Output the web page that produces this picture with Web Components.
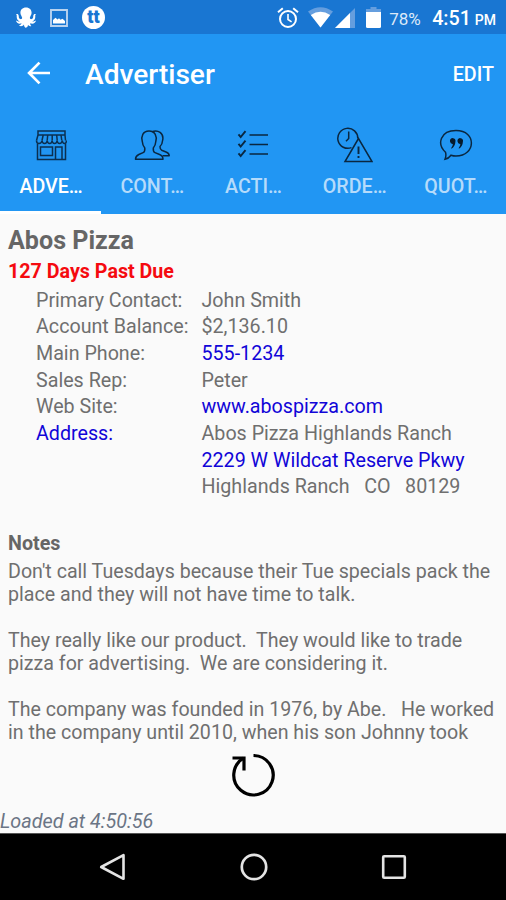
<!DOCTYPE html>
<html lang="en">
<head>
<meta charset="utf-8">
<title>Advertiser</title>
<style>
    body{
        margin: 0;
        font-family: Roboto, "Liberation Sans", sans-serif;
        font-size: 19.68px;
        color: #6f6f6f;
        background: #fafafa;
    }
</style>
</head>
<body>
<advertiser-app></advertiser-app>

<script>
const icons = {
    octopus: [22, 22, `<path fill="#fff" d="M11 0.500c-3.600 0-5.600 2.300-5.600 5.300 0 2 1.300 3.400 1.700 4.700.2 1.200-.7 1.900-1.900 1.600-1.500-.4-1.300-1.800-1.500-3.300C3.500 7.200 2.300 6.500 1 7.300c1.100.6.7 1.600.7 2.600.1 2 1.100 3.700 3 4.300-1.200.5-2.600.2-3.700-.6.3 2.600 3.200 3.800 5.600 2.700-.5 1.300-1.400 1.900-2.600 2 1.300 1.600 3.800 1.200 5-.7 0 1.200.3 2.300 1.400 3.200 1.400-.1 2.400-.9 2.600-2.700.8.900 1.900 1.500 3.400.9-.9-.5-1.300-1.500-1.200-2.700 2.400 1.200 5.400.1 5.800-2.700-1.100.8-2.500 1.100-3.700.6 1.900-.6 2.900-2.300 3-4.300 0-1-.4-2 .7-2.600-1.300-.8-2.500-.1-2.700 1.500-.2 1.500 0 2.900-1.500 3.300-1.200.3-2.100-.4-1.900-1.600.4-1.300 1.700-2.700 1.700-4.700 0-3-2-5.300-5.600-5.300z"/>`],
    picture: [18, 18, `<path d="M1 1h16v16H1z" fill="none" stroke="#b9d3f0" stroke-width="1.900"/><path fill="#fff" d="M3 14.500v-3.500l2.500-2.200 2 1.800 1.500-1.300 1.500 1.500 2-1 2.500 2.200v2.500z"/>`],
    alarm: [22, 22, `<g fill="none" stroke="#fff" stroke-width="2"><circle cx="11" cy="12" r="8"/><path d="M11 7v5.500l3.600 2.300" stroke-width="1.600"/><path d="M1 5.300L5.800 1.300M21 5.300l-4.800-4"/></g>`],
    wifi: [25, 21, `<path fill="#659ede" d="M0 4.500Q12.500-4 25 4.500L12.500 20.500z"/><path fill="#fff" d="M2.800 8Q12.500 1.500 22.200 8L12.500 20.500z"/>`],
    signal: [20, 20, `<path fill="#659ede" d="M20 0v20H0z"/><path fill="#fff" d="M15 5v15H0z"/>`],
    battery: [15, 21, `<path fill="#659ede" d="M4.500 0h6v2H15v5H0V2h4.500z"/><path fill="#fff" d="M0 5h15v14.500q0 1.500-1.500 1.500h-12Q0 21 0 19.500z"/>`],
    back: [24, 24, `<path d="M23 12H2.500M12.500 1.600L2.100 12l10.400 10.400" fill="none" stroke="#fff" stroke-width="2.700"/>`],
    store: [32, 32, `<g fill="none" stroke="#0b2f50" stroke-width="1.500"><path d="M3 2h27v4H3zM3 6L1.500 11.500M30 6l.500 5.500M2.500 14.500V30.500h28V14.500"/><path d="M1.500 11.500q0 3 2.500 3t3-3q.3 3 2.600 3t2.600-3q.3 3 2.500 3t2.400-3q.3 3 2.500 3t2.500-3q.3 3 2.500 3t2.700-3q.3 3 2.200 3t2-3"/><path d="M8.200 6L7 11.500M12.700 6l-.5 5.500M17.200 6v5.500M21.700 6l.5 5.500M26 6l.800 5.500"/><path d="M5.500 18h12v8.500h-12zM20.500 30V18h6.500v12.500"/></g>`],
    contacts: [36, 32, `<g fill="none" stroke="#0a2740" stroke-width="1.500" stroke-linejoin="round"><path d="M1.500 30.300h27.500q0-3.500-3.400-4.800l-4.600-1.900q-2-.8-1.700-4.600 2.200-2.300 2.500-6.500c1.400-5-.6-10.500-6.800-10.500S6.900 7.500 8.300 12.500q.3 4.200 2.500 6.500.3 3.800-1.700 4.600L4.800 25.500Q1.500 27 1.500 30.300z"/><path d="M18 2.700c6-2.500 12 1.500 10.700 8.300q-.4 4.500-2.700 6.500-.1 3 1.700 3.800l4.300 1.700q3.200 1.300 3.200 3.700h-6.500"/></g>`],
    checks: [32, 30, `<g fill="none" stroke="#0a2740"><path stroke-width="1.600" d="M12.500 5H31M12.500 14.500H31M12.500 24H31"/><path stroke-width="1.900" d="M1.500 4.300l2.200 2.700L8.500 1.200M1.500 13.800l2.200 2.700 4.800-5.800M1.500 23.300l2.200 2.700 4.800-5.800"/></g>`],
    overdue: [36, 36, `<g fill="none" stroke="#0a2740" stroke-width="1.500"><path d="M14.500 20.600A10 10 0 1 1 20.800 11.500"/><path d="M11.700 4.500V11.500L9 14.200"/><path d="M21.500 11.500L8 34.500h27z"/><path stroke-width="1.900" d="M21.500 19.500v7.500M21.500 29v2"/></g>`],
    quote: [34, 32, `<path d="M6.500 23.200C-2.500 15 1.500 1.500 17 1.500c21 0 20 25.500 0 25.500q-2.500 0-5-.8-2.300 3.200-6 4 1.500-3.500.500-7z" fill="none" stroke="#0a2740" stroke-width="1.500"/><path fill="#061a2c" d="M11 12.500a2.800 2.800 0 1 1 5.400.300q-.2 4.500-4 7-.7-.6.700-2.300.8-1.400.7-2.600-2.400.2-2.800-2.400zM18.500 12.500a2.800 2.800 0 1 1 5.400.300q-.2 4.500-4 7-.7-.6.700-2.300.8-1.400.7-2.600-2.400.2-2.800-2.400z"/>`],
    refresh: [46, 46, `<g fill="none" stroke="#000" stroke-width="3.200"><path d="M23.500 3.500A19.700 19.700 0 1 1 13.500 6.200"/><path d="M2.500 6h11.500v12.500"/></g>`],
    navBack: [28, 28, `<path d="M24.500 2.200v23.600L2.200 14z" fill="none" stroke="#e4e4e4" stroke-width="2.600" stroke-linejoin="round"/>`],
    navHome: [28, 28, `<circle cx="14" cy="14" r="12.200" fill="none" stroke="#e4e4e4" stroke-width="2.700"/>`],
    navRecent: [26, 26, `<rect x="2.200" y="2.200" width="21.600" height="21.600" rx="1" fill="none" stroke="#e4e4e4" stroke-width="2.600"/>`]
};

class AppIcon extends HTMLElement{
    constructor(){
        super();
        this.attachShadow({ mode: 'open' });
    }

    connectedCallback(){
        const [w, h, shapes] = icons[this.getAttribute('name')];
        this.shadowRoot.innerHTML = `
        <style>
            :host{ display: block; flex: none; width: ${w}px; height: ${h}px; }
            svg{ display: block; }
        </style>
        <svg width="${w}" height="${h}" viewBox="0 0 ${w} ${h}">${shapes}</svg>`;
    }
}
customElements.define('app-icon', AppIcon);

// registers an element whose shadow root is a clone of the given markup
function define(name, html){
    const template = document.createElement('template');
    template.innerHTML = html;
    customElements.define(name, class extends HTMLElement{
        constructor(){
            super();
            this.attachShadow({ mode: 'open' });
            this.shadowRoot.appendChild(template.content.cloneNode(true));
        }
    });
}

define('status-bar', `
<style>
    :host{
        display: flex;
        align-items: center;
        box-sizing: border-box;
        height: 34px;
        padding: 1px 10px 0 15px;
        background: #1976d2;
        color: #fff;
    }
    .badge{
        width: 23px;
        height: 23px;
        border-radius: 50%;
        background: #fff;
        color: #1976d2;
        font-size: 18px;
        font-weight: 900;
        line-height: 21px;
        text-align: center;
        margin-left: 14px;
    }
    .percent{ margin: 2px 0 0 8px; font-size: 17px; width: 43px; color: #dce9f8; }
    .time{ margin-top: 2px; font-size: 19.700px; font-weight: 500; white-space: nowrap; }
    small{ font-size: 14px; margin-left: -1px; }
</style>
<app-icon name="octopus"></app-icon>
<app-icon name="picture" style="margin-left:13px"></app-icon>
<span class="badge">tt</span>
<app-icon name="alarm" style="margin-left:auto"></app-icon>
<app-icon name="wifi" style="margin-left:9px"></app-icon>
<app-icon name="signal" style="margin-left:2px"></app-icon>
<app-icon name="battery" style="margin-left:11px"></app-icon>
<span class="percent">78%</span>
<span class="time">4:51 <small>PM</small></span>
`);

define('tool-bar', `
<style>
    :host{
        display: flex;
        align-items: center;
        box-sizing: border-box;
        height: 78px;
        padding: 0 12px 0 27px;
        background: #2196f3;
        color: #fff;
        font-weight: 500;
    }
    h1{
        flex: 1;
        margin: 3px 0 0 34px;
        font-size: 28.100px;
        font-weight: 500;
    }
    .action{ margin-top: 2px; }
</style>
<app-icon name="back"></app-icon>
<h1><slot></slot></h1>
<span class="action"><slot name="action"></slot></span>
`);

define('tab-item', `
<style>
    :host{
        display: flex;
        flex-direction: column;
        align-items: center;
        box-sizing: border-box;
        padding-left: 1px;
        border-bottom: 3px solid transparent;
        color: #b5dbfb;
        font-weight: 500;
    }
    :host([selected]){
        color: #fff;
        border-color: #fff;
    }
    .icon{
        display: flex;
        align-items: center;
        height: 36px;
        margin-top: 15px;
    }
    .label{ margin-top: 12px; line-height: 23px; }
</style>
<div class="icon"><slot name="icon"></slot></div>
<div class="label"><slot></slot></div>
`);

define('tab-strip', `
<style>
    :host{
        display: grid;
        grid-template-columns: repeat(5, 1fr);
        height: 101.500px;
        background: #2196f3;
    }
</style>
<slot></slot>
`);

define('detail-row', `
<style>
    :host{
        display: grid;
        grid-template-columns: 165.500px 1fr;
        line-height: 26.700px;
        white-space: pre;
    }
    :host([link]) .value, :host([linklabel]) .label{ color: #1105d8; }
</style>
<span class="label"><slot name="label"></slot></span>
<span class="value"><slot></slot></span>
`);

define('advertiser-details', `
<style>
    :host{ display: block; padding: 12px 8px 0; }
    h2{ margin: 0; font-size: 25.100px; line-height: 30px; font-weight: 700; color: #666; }
    .due{ color: #f50a0f; font-weight: 700; line-height: 23px; margin-top: 4px; }
    .rows{ padding: 5px 0 0 28px; }
</style>
<h2><slot name="name"></slot></h2>
<div class="due"><slot name="due"></slot></div>
<div class="rows"><slot></slot></div>
`);

define('notes-block', `
<style>
    :host{ display: block; padding: 30.500px 0 0 8px; }
    h3{ margin: 0 0 5px; font-size: inherit; line-height: 23px; font-weight: 700; color: #666; }
    .text{ font-size: 19.640px; line-height: 23px; white-space: pre; }
</style>
<h3>Notes</h3>
<div class="text"><slot></slot></div>
`);

define('nav-bar', `
<style>
    :host{
        display: flex;
        align-items: center;
        justify-content: space-between;
        box-sizing: border-box;
        height: 67px;
        padding: 0 99px;
        background: #000;
        border-top: 1px solid #555;
    }
</style>
<app-icon name="navBack"></app-icon>
<app-icon name="navHome"></app-icon>
<app-icon name="navRecent"></app-icon>
`);

define('advertiser-app', `
<style>
    :host{
        display: flex;
        flex-direction: column;
        width: 506px;
        height: 900px;
        overflow: hidden;
    }
    main{ flex: 1; min-height: 0; }
    footer{ color: #6b7585; font-style: italic; font-size: 19.800px; line-height: 23px; }
    .refresh{ display: flex; justify-content: center; padding-bottom: 12px; }
</style>
<status-bar></status-bar>
<tool-bar>Advertiser<span slot="action">EDIT</span></tool-bar>
<tab-strip>
    <tab-item selected><app-icon slot="icon" name="store"></app-icon>ADVE…</tab-item>
    <tab-item><app-icon slot="icon" name="contacts"></app-icon>CONT…</tab-item>
    <tab-item><app-icon slot="icon" name="checks"></app-icon>ACTI…</tab-item>
    <tab-item><app-icon slot="icon" name="overdue"></app-icon>ORDE…</tab-item>
    <tab-item><app-icon slot="icon" name="quote"></app-icon>QUOT…</tab-item>
</tab-strip>
<main>
    <advertiser-details>
        <span slot="name">Abos Pizza</span>
        <span slot="due">127 Days Past Due</span>
        <detail-row><span slot="label">Primary Contact:</span>John Smith</detail-row>
        <detail-row><span slot="label">Account Balance:</span>$2,136.10</detail-row>
        <detail-row link><span slot="label">Main Phone:</span>555-1234</detail-row>
        <detail-row><span slot="label">Sales Rep:</span>Peter</detail-row>
        <detail-row link><span slot="label">Web Site:</span>www.abospizza.com</detail-row>
        <detail-row linklabel><span slot="label">Address:</span>Abos Pizza Highlands Ranch</detail-row>
        <detail-row link>2229 W Wildcat Reserve Pkwy</detail-row>
        <detail-row>Highlands Ranch   CO   80129</detail-row>
    </advertiser-details>
    <notes-block>Don't call Tuesdays because their Tue specials pack the
place and they will not have time to talk.

They really like our product.  They would like to trade
pizza for advertising.  We are considering it.

The company was founded in 1976, by Abe.   He worked
in the company until 2010, when his son Johnny took</notes-block>
</main>
<div class="refresh"><app-icon name="refresh"></app-icon></div>
<footer>Loaded at 4:50:56</footer>
<nav-bar></nav-bar>
`);
</script>
</body>
</html>
